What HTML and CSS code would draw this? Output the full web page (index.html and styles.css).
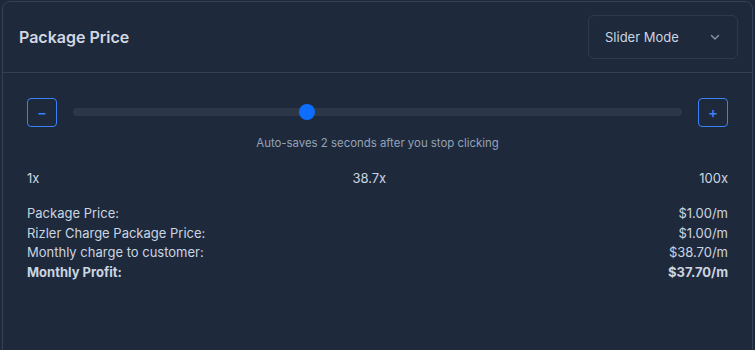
FILE: index.html
```html
<!DOCTYPE html>
<html lang="en">
<head>
    <meta charset="UTF-8">
    <meta name="viewport" content="width=device-width, initial-scale=1.0">
    <title>Package Price</title>
    <link rel="stylesheet" href="styles.css">
</head>
<body>
    <div class="card">
        <div class="card-header">
            <h2 class="title">Package Price</h2>
            <div class="mode-select">
                <span>Slider Mode</span>
                <svg width="12" height="12" viewBox="0 0 12 12" class="chevron">
                    <path d="M2.5 4.5 L6 8 L9.5 4.5" fill="none" stroke="currentColor" stroke-width="1.5" stroke-linecap="round" stroke-linejoin="round"></path>
                </svg>
            </div>
        </div>

        <div class="card-body">
            <div class="slider-row">
                <button class="step-btn">&minus;</button>
                <div class="track">
                    <div class="thumb" style="left: 38.4%"></div>
                </div>
                <button class="step-btn">+</button>
            </div>
            <p class="hint">Auto-saves 2 seconds after you stop clicking</p>

            <div class="scale">
                <span>1x</span>
                <span>38.7x</span>
                <span>100x</span>
            </div>

            <div class="summary">
                <div class="line"><span>Package Price:</span><span>$1.00/m</span></div>
                <div class="line"><span>Rizler Charge Package Price:</span><span>$1.00/m</span></div>
                <div class="line"><span>Monthly charge to customer:</span><span>$38.70/m</span></div>
                <div class="line total"><span>Monthly Profit:</span><span>$37.70/m</span></div>
            </div>
        </div>
    </div>
</body>
</html>
```

FILE: styles.css
```css
* {
    margin: 0;
    padding: 0;
    box-sizing: border-box;
}

body {
    font-family: Inter, "Liberation Sans", sans-serif;
    background-color: #1e293b;
    color: #cbd5e1;
    overflow: hidden;
}

.card {
    margin: 1px 0 0 2px;
    width: 751px;
    height: 400px;
    border: 1px solid #334155;
    border-radius: 8px;
    background-color: #1e293b;
}

.card-header {
    height: 71px;
    display: flex;
    align-items: center;
    justify-content: space-between;
    padding: 0 14px 0 16px;
    border-bottom: 1px solid #334155;
}

.title {
    font-size: 16px;
    font-weight: 600;
    color: #d1d8e2;
}

.mode-select {
    width: 150px;
    height: 44px;
    display: flex;
    align-items: center;
    justify-content: space-between;
    padding: 0 16px 0 16px;
    border: 1px solid #2c3a4f;
    border-radius: 6px;
    font-size: 13px;
    color: #cbd5e1;
}

.chevron {
    color: #8391a7;
}

.card-body {
    padding: 24px 24px 0 24px;
}

.slider-row {
    display: flex;
    align-items: center;
    gap: 16px;
    height: 30px;
}

.step-btn {
    width: 30px;
    height: 29px;
    flex: none;
    background: transparent;
    border: 1.5px solid #3b82f6;
    border-radius: 4px;
    color: #3b82f6;
    font-family: inherit;
    font-size: 15px;
    font-weight: 500;
    line-height: 1;
    display: flex;
    align-items: center;
    justify-content: center;
}

.track {
    flex: 1;
    height: 8px;
    border-radius: 4px;
    background-color: #2d3748;
    position: relative;
}

.thumb {
    position: absolute;
    top: 50%;
    width: 16px;
    height: 16px;
    margin: -8px 0 0 -8px;
    border-radius: 50%;
    background-color: #0d6efd;
}

.hint {
    margin-top: 9px;
    text-align: center;
    font-size: 11.4px;
    color: #94a3b8;
}

.scale {
    margin-top: 20px;
    display: flex;
    justify-content: space-between;
    font-size: 13px;
}

.summary {
    margin-top: 18px;
    font-size: 13px;
}

.line {
    display: flex;
    justify-content: space-between;
    line-height: 19.6px;
}

.line.total {
    font-weight: 700;
}
```
